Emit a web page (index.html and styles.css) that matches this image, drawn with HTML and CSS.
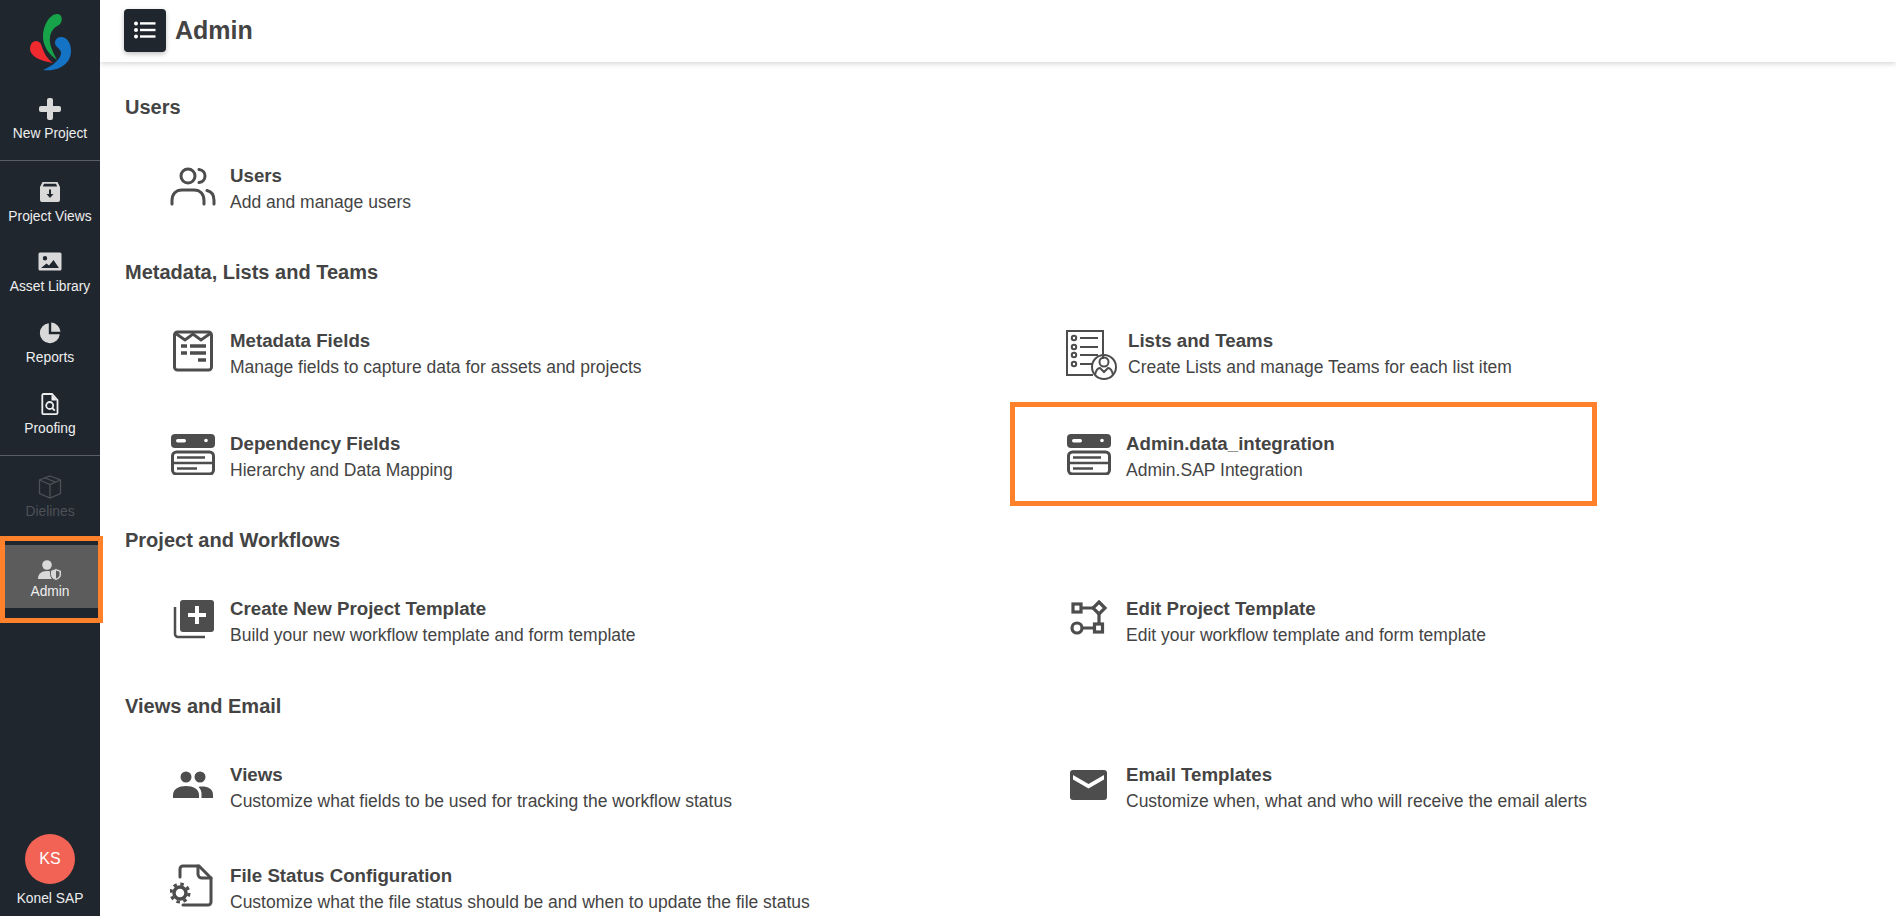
FILE: index.html
```html
<!DOCTYPE html>
<html lang="en">
<head>
<meta charset="utf-8">
<title>Admin</title>
<link rel="stylesheet" href="styles.css">
</head>
<body>
<div class="shell">
  <aside class="sidebar">
    <div class="logo">
      <svg width="50" height="64" viewBox="25 10 50 64">
        <path fill="#17a34a" d="M57 14C50 14 43 25 43 37C43 47 50 55 57 60C52 50 49 44 50 37C51 30 55 27 59 25C63 22 63 14 57 14Z"/>
        <path fill="#ee2a2e" d="M36 41C32 41 30 45 30 49C30 56 40 61 53 63C46 58 44 52 42 47C41 43 39 41 36 41Z"/>
        <path fill="#1473c4" d="M61 37C57 37 55 40 55 43C55 47 60 48 61 52C62 58 53 66 43 70C58 72 71 64 71 51C71 43 67 37 61 37Z"/>
      </svg>
    </div>
    <a class="nav-item">
      <svg class="nav-icon" viewBox="0 0 24 24"><path fill="#d9d9d9" d="M9 3a2 2 0 0 1 2-2h2a2 2 0 0 1 2 2v6h6a2 2 0 0 1 2 2v2a2 2 0 0 1-2 2h-6v6a2 2 0 0 1-2 2h-2a2 2 0 0 1-2-2v-6H3a2 2 0 0 1-2-2v-2a2 2 0 0 1 2-2h6z"/></svg>
      <span>New Project</span>
    </a>
    <div class="divider"></div>
    <div class="nav-group">
      <a class="nav-item">
        <svg class="nav-icon" viewBox="0 0 24 24"><path fill="#d9d9d9" d="M4.500 2h15L22 7v13a2 2 0 0 1-2 2H4a2 2 0 0 1-2-2V7zM4.800 6.500h14.400L18 3.800H6z"/><path fill="#20262e" d="M11 9.500h2V14h2.500L12 18l-3.500-4H11z"/></svg>
        <span>Project Views</span>
      </a>
      <a class="nav-item">
        <svg class="nav-icon" viewBox="0 0 24 24"><path fill="#d9d9d9" fill-rule="evenodd" d="M2 2.500h20a1.500 1.500 0 0 1 1.500 1.500v15a1.500 1.500 0 0 1-1.500 1.500H2A1.500 1.500 0 0 1 .5 19V4A1.500 1.500 0 0 1 2 2.500zM7 6a2.200 2.200 0 1 0 0 4.400a2.200 2.200 0 0 0 0-4.400zM3 18h18l-5.500-8l-4.500 5.500l-2.500-2z"/></svg>
        <span>Asset Library</span>
      </a>
      <a class="nav-item nav-item--low">
        <svg class="nav-icon" viewBox="0 0 24 24"><path fill="#d9d9d9" d="M10.800 2.200v11h11A10 10 0 1 1 10.800 2.200zM13.200 1.500a10 10 0 0 1 9.300 9.300h-9.300z"/></svg>
        <span>Reports</span>
      </a>
      <a class="nav-item nav-item--low">
        <svg class="nav-icon" viewBox="0 0 24 24"><path fill="none" stroke="#eee" stroke-width="1.800" d="M5.500 2h8.500l5.500 6v13a1.200 1.200 0 0 1-1.200 1.200H5.500a1.200 1.200 0 0 1-1.200-1.200V3.200A1.200 1.200 0 0 1 5.500 2z"/><path fill="#eee" d="M13.500 2.500v6h5.500z"/><circle cx="11.700" cy="13.500" r="3.500" fill="none" stroke="#eee" stroke-width="1.800"/><path stroke="#eee" stroke-width="1.800" d="M14.200 16l2.600 2.600"/></svg>
        <span>Proofing</span>
      </a>
    </div>
    <div class="divider"></div>
    <div class="nav-group">
      <a class="nav-item nav-item--disabled">
        <svg class="nav-icon" viewBox="0 0 24 24"><path fill="none" stroke="#4c5157" stroke-width="1.300" d="M12 1l10.500 4v13.500L12 23L1.500 18.500V5zM1.500 5L12 9.500L22.500 5M12 9.500V23M7 3l10.500 4.200"/></svg>
        <span>Dielines</span>
      </a>
      <a class="nav-item nav-item--active">
        <svg class="nav-icon" viewBox="0 0 24 24"><circle cx="9" cy="7" r="4.800" fill="#d9d9d9"/><path fill="#d9d9d9" d="M0 21c0-5 3-8 9-8c2 0 3 .3 4.500.9V21z"/><path fill="#d9d9d9" stroke="#5c5c5c" stroke-width="1" d="M18 10.500l5.500 2v4c0 3-2.500 5-5.500 6c-3-1-5.500-3-5.500-6v-4z"/><path fill="#5c5c5c" d="M18 12.500l3.500 1.200v3c0 2-1.500 3-3.500 3.800z"/></svg>
        <span>Admin</span>
      </a>
    </div>
    <div class="profile">
      <div class="avatar">KS</div>
      <span>Konel SAP</span>
    </div>
  </aside>

  <div class="content">
    <header class="topbar">
      <button class="menu-btn" type="button" aria-label="Menu">
        <svg width="22" height="18" viewBox="0 0 22 18"><g fill="#fff"><circle cx="2" cy="2.500" r="2"/><circle cx="2" cy="9" r="2"/><circle cx="2" cy="15.500" r="2"/><rect x="6" y="1.200" width="15.500" height="2.400"/><rect x="6" y="7.800" width="15.500" height="2.400"/><rect x="6" y="14.300" width="15.500" height="2.400"/></g></svg>
      </button>
      <h1>Admin</h1>
    </header>

    <main class="page">
      <section class="section section--first">
        <h2>Users</h2>
        <div class="grid">
          <div class="item">
            <svg class="icon icon--low" width="46" height="40" viewBox="0 0 46 40"><g fill="none" stroke="#4d4d4d" stroke-width="3" stroke-linecap="round"><circle cx="18" cy="9" r="7"/><path d="M29 2.500c4 .5 6 3.500 6 6.500s-2 6-6 6.500"/><path d="M2 37v-3c0-7 4-11 10-11h12c6 0 10 4 10 11v3"/><path d="M37 23.500c4.500 1 7 5 7 10V37"/></g></svg>
            <div class="text"><h3>Users</h3><p>Add and manage users</p></div>
          </div>
        </div>
      </section>

      <section class="section section--snug">
        <h2>Metadata, Lists and Teams</h2>
        <div class="grid">
          <div class="item">
            <svg class="icon" width="46" height="42" viewBox="0 0 46 42"><g fill="none" stroke="#4d4d4d"><rect x="4.500" y="2" width="37" height="38" rx="3" stroke-width="3"/><path stroke-width="3" d="M5 3l10 7l8-6l8 6l10-7"/><path stroke-width="3.400" d="M11 16h6M20 16h16M11 23h6M20 23h16M28 30h8"/></g></svg>
            <div class="text"><h3>Metadata Fields</h3><p>Manage fields to capture data for assets and projects</p></div>
          </div>
          <div class="item">
            <svg class="icon icon--wide" width="54" height="52" viewBox="0 0 54 52"><g fill="none" stroke="#4d4d4d" stroke-width="2"><path d="M28 46H2V2h36v28"/><circle cx="9" cy="9" r="2.200"/><circle cx="9" cy="18" r="2.200"/><circle cx="9" cy="26" r="2.200"/><circle cx="9" cy="35" r="2.200"/><path d="M15 9h18M15 18h18M15 26h18M15 35h12"/><circle cx="39" cy="38" r="12"/><circle cx="39" cy="33" r="4.500"/><path d="M30 46c1-5 3-7 5-7l4 4l4-4c2 0 4 2 5 7"/></g></svg>
            <div class="text"><h3>Lists and Teams</h3><p>Create Lists and manage Teams for each list item</p></div>
          </div>
          <div class="item">
            <svg class="icon" width="46" height="42" viewBox="0 0 46 42"><use href="#server"/></svg>
            <div class="text"><h3>Dependency Fields</h3><p>Hierarchy and Data Mapping</p></div>
          </div>
          <div class="item item--marked">
            <svg class="icon" width="46" height="42" viewBox="0 0 46 42"><use href="#server"/></svg>
            <div class="text"><h3>Admin.data_integration</h3><p>Admin.SAP Integration</p></div>
          </div>
        </div>
      </section>

      <section class="section section--snug">
        <h2>Project and Workflows</h2>
        <div class="grid">
          <div class="item">
            <svg class="icon" width="46" height="42" viewBox="0 0 46 42"><path fill="none" stroke="#4d4d4d" stroke-width="2.500" d="M5 9v27a3 3 0 0 0 3 3h27"/><rect x="10" y="2" width="34" height="32" rx="3" fill="#4d4d4d"/><path fill="#fff" d="M25 8h4v7h7v4h-7v7h-4v-7h-7v-4h7z"/></svg>
            <div class="text"><h3>Create New Project Template</h3><p>Build your new workflow template and form template</p></div>
          </div>
          <div class="item">
            <svg class="icon icon--nudge" width="46" height="42" viewBox="0 0 46 42"><g fill="none" stroke="#4d4d4d" stroke-width="3.200"><rect x="7" y="5" width="8" height="8"/><path d="M33 3l6 6l-6 6l-6-6z"/><circle cx="11" cy="29" r="5"/><rect x="28.500" y="25" width="8" height="8"/><path d="M15 9h12M33 15v10M16 29h12.500"/></g></svg>
            <div class="text"><h3>Edit Project Template</h3><p>Edit your workflow template and form template</p></div>
          </div>
        </div>
      </section>

      <section class="section">
        <h2>Views and Email</h2>
        <div class="grid grid--tight">
          <div class="item">
            <svg class="icon" width="46" height="42" viewBox="0 0 46 42"><g fill="#4d4d4d"><circle cx="16" cy="13" r="5.500"/><circle cx="30" cy="13" r="5.500"/><path d="M3 34v-3c0-6 6-9 13-9s13 3 13 9v3z"/><path d="M31.500 34v-4c0-3-1-5-3-7c1-.5 2-.6 3.500-.6c6 0 11 2.600 11 8V34z"/></g></svg>
            <div class="text"><h3>Views</h3><p>Customize what fields to be used for tracking the workflow status</p></div>
          </div>
          <div class="item">
            <svg class="icon" width="46" height="42" viewBox="0 0 46 42"><rect x="4" y="6" width="37" height="30" rx="3" fill="#4d4d4d"/><path fill="#fff" d="M7 11l15.500 9L38 11v4.500L22.500 24.500L7 15.500z"/></svg>
            <div class="text"><h3>Email Templates</h3><p>Customize when, what and who will receive the email alerts</p></div>
          </div>
          <div class="item">
            <svg class="icon icon--up" width="46" height="44" viewBox="0 0 46 44"><g fill="none" stroke="#4d4d4d" stroke-width="3" stroke-linecap="round"><path d="M10 14V6a3 3 0 0 1 3-3h16l12 12v24a3 3 0 0 1-3 3H13"/><path d="M28 3v8a4 4 0 0 0 4 4h9"/></g><circle cx="10" cy="30" r="6" fill="none" stroke="#4d4d4d" stroke-width="3.500"/><circle cx="10" cy="30" r="9" fill="none" stroke="#4d4d4d" stroke-width="3" stroke-dasharray="3.500 3.570"/></svg>
            <div class="text"><h3>File Status Configuration</h3><p>Customize what the file status should be and when to update the file status</p></div>
          </div>
        </div>
      </section>
    </main>
  </div>
</div>

<svg class="defs" width="0" height="0">
  <defs>
    <g id="server">
      <rect x="1" y="1" width="44" height="14" rx="4" fill="#4d4d4d"/>
      <rect x="6" y="6" width="10" height="3.500" rx="1.700" fill="#fff"/>
      <circle cx="36" cy="7.500" r="1.800" fill="#fff"/>
      <rect x="2.500" y="19" width="41" height="22" rx="4" fill="none" stroke="#4d4d4d" stroke-width="3"/>
      <path stroke="#4d4d4d" stroke-width="2.500" d="M3 30h40"/>
      <path stroke="#4d4d4d" stroke-width="2.500" d="M7 24.500h28M7 35.500h20"/>
    </g>
  </defs>
</svg>
</body>
</html>
```

FILE: styles.css
```css
*, *::after { box-sizing: border-box; }
html, body { margin: 0; height: 100%; overflow: hidden; }
body { font-family: "Liberation Sans", Arial, sans-serif; color: #444; background: #fff; }
.defs { position: absolute; }

.shell { display: flex; height: 916px; }

.sidebar {
  width: 100px;
  flex: none;
  display: flex;
  flex-direction: column;
  background: #20262e;
  color: #eee;
  font-size: 13.800px;
  line-height: 16px;
  z-index: 2;
}
.logo { height: 84px; display: flex; justify-content: center; align-items: flex-start; padding-top: 10px; }
.nav-item {
  height: 70px;
  display: flex;
  flex-direction: column;
  align-items: center;
  justify-content: center;
  gap: 5px;
  white-space: nowrap;
}
.nav-item--low { margin-top: 1px; }
.nav-icon { width: 24px; height: 24px; display: block; }
.divider { height: 1px; margin-top: 6px; background: #5a5f65; }
.nav-group { padding-top: 6px; }
.nav-item--disabled { color: #4c5157; }
.nav-item--active {
  position: relative;
  height: 63px;
  margin-top: 13px;
  background: #5c5c5c;
  gap: 2px;
  justify-content: flex-end;
  padding-bottom: 8px;
}
.nav-item--active::after {
  content: "";
  position: absolute;
  inset: -9px -3px -15px 0;
  border: 5px solid #ff812b;
}
.profile { margin-top: auto; padding-bottom: 9px; display: flex; flex-direction: column; align-items: center; gap: 7px; }
.avatar {
  width: 50px;
  height: 50px;
  border-radius: 50%;
  background: #f26355;
  color: #fff;
  font-size: 16px;
  display: flex;
  align-items: center;
  justify-content: center;
}

.content { flex: 1; min-width: 0; display: flex; flex-direction: column; }
.topbar {
  height: 62px;
  flex: none;
  display: flex;
  align-items: center;
  gap: 9px;
  padding: 0 0 2px 24px;
  background: #fff;
  box-shadow: 0 1px 6px rgba(0, 0, 0, .2);
}
.menu-btn {
  width: 42px;
  height: 43px;
  padding: 0;
  border: 0;
  border-radius: 4px;
  background: #20262e;
  box-shadow: 0 2px 5px rgba(0, 0, 0, .25);
  display: flex;
  align-items: center;
  justify-content: center;
}
h1 { margin: 0; font-size: 25px; line-height: 30px; font-weight: 700; color: #444; }

.page { padding-left: 25px; }
.section { padding-top: 22px; }
.section--first { padding-top: 33px; }
.section--snug { padding-top: 21px; }
h2 { margin: 0 0 20px; font-size: 20px; line-height: 24px; font-weight: 700; color: #444; }
.grid { display: grid; grid-template-columns: 896px 1fr; row-gap: 3px; }
.grid--tight { row-gap: 1px; }
.item { position: relative; height: 100px; display: flex; align-items: flex-start; padding: 24px 0 0 45px; gap: 14px; }
.icon { flex: none; display: block; margin-top: 2px; }
.icon--low { margin-top: 4px; }
.icon--nudge { margin-top: 3px; }
.icon--up { margin-top: 0; }
.icon--wide { margin-top: 1px; margin-right: -5px; margin-left: -1px; width: 54px; }
.text { min-width: 0; }
h3 { margin: 0; font-size: 18.700px; line-height: 26px; font-weight: 700; color: #444; }
p { margin: 0; font-size: 17.500px; line-height: 27px; color: #444; }
.item--marked::after {
  content: "";
  position: absolute;
  left: -11px;
  top: -5px;
  width: 587px;
  height: 104px;
  border: 5px solid #ff812b;
}
```
